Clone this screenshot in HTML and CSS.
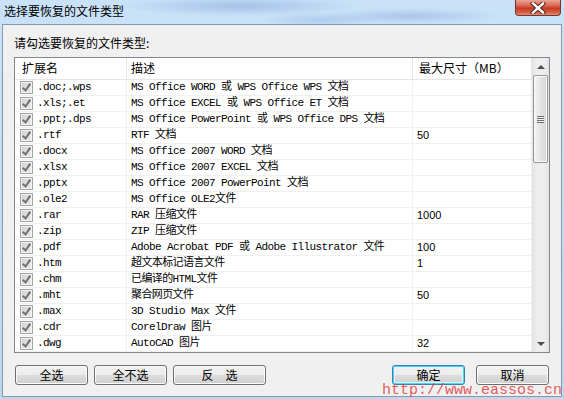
FILE: index.html
```html
<!DOCTYPE html>
<html lang="zh-CN">
<head>
    <meta charset="UTF-8">
    <title>选择要恢复的文件类型</title>
    <link rel="stylesheet" href="styles.css">
</head>
<body>
<div class="window">
    <div class="titlebar">
        <span class="title">选择要恢复的文件类型</span>
        <span class="close-btn">
            <svg width="16" height="12" viewBox="0 0 16 12">
                <path d="M3 1.5 L13 10.5 M13 1.5 L3 10.5" stroke="#4a2a24" stroke-width="4.4" stroke-linecap="square"/>
                <path d="M3 1.5 L13 10.5 M13 1.5 L3 10.5" stroke="#fff" stroke-width="2.4" stroke-linecap="square"/>
            </svg>
        </span>
    </div>
    <div class="client">
        <div class="prompt">请勾选要恢复的文件类型:</div>
        <div class="listview">
            <div class="list-body">
                <div class="list-head">
                    <div class="hcell">扩展名</div>
                    <div class="hcell">描述</div>
                    <div class="hcell">最大尺寸（MB）</div>
                </div>
                <div class="row"><div class="cell ext"><span class="check"></span>.doc;.wps</div><div class="cell desc">MS Office WORD 或 WPS Office WPS 文档</div><div class="cell size"></div></div>
                <div class="row"><div class="cell ext"><span class="check"></span>.xls;.et</div><div class="cell desc">MS Office EXCEL 或 WPS Office ET 文档</div><div class="cell size"></div></div>
                <div class="row"><div class="cell ext"><span class="check"></span>.ppt;.dps</div><div class="cell desc">MS Office PowerPoint 或 WPS Office DPS 文档</div><div class="cell size"></div></div>
                <div class="row"><div class="cell ext"><span class="check"></span>.rtf</div><div class="cell desc">RTF 文档</div><div class="cell size">50</div></div>
                <div class="row"><div class="cell ext"><span class="check"></span>.docx</div><div class="cell desc">MS Office 2007 WORD 文档</div><div class="cell size"></div></div>
                <div class="row"><div class="cell ext"><span class="check"></span>.xlsx</div><div class="cell desc">MS Office 2007 EXCEL 文档</div><div class="cell size"></div></div>
                <div class="row"><div class="cell ext"><span class="check"></span>.pptx</div><div class="cell desc">MS Office 2007 PowerPoint 文档</div><div class="cell size"></div></div>
                <div class="row"><div class="cell ext"><span class="check"></span>.ole2</div><div class="cell desc">MS Office OLE2文件</div><div class="cell size"></div></div>
                <div class="row"><div class="cell ext"><span class="check"></span>.rar</div><div class="cell desc">RAR 压缩文件</div><div class="cell size">1000</div></div>
                <div class="row"><div class="cell ext"><span class="check"></span>.zip</div><div class="cell desc">ZIP 压缩文件</div><div class="cell size"></div></div>
                <div class="row"><div class="cell ext"><span class="check"></span>.pdf</div><div class="cell desc">Adobe Acrobat PDF 或 Adobe Illustrator 文件</div><div class="cell size">100</div></div>
                <div class="row"><div class="cell ext"><span class="check"></span>.htm</div><div class="cell desc">超文本标记语言文件</div><div class="cell size">1</div></div>
                <div class="row"><div class="cell ext"><span class="check"></span>.chm</div><div class="cell desc">已编译的HTML文件</div><div class="cell size"></div></div>
                <div class="row"><div class="cell ext"><span class="check"></span>.mht</div><div class="cell desc">聚合网页文件</div><div class="cell size">50</div></div>
                <div class="row"><div class="cell ext"><span class="check"></span>.max</div><div class="cell desc">3D Studio Max 文件</div><div class="cell size"></div></div>
                <div class="row"><div class="cell ext"><span class="check"></span>.cdr</div><div class="cell desc">CorelDraw 图片</div><div class="cell size"></div></div>
                <div class="row"><div class="cell ext"><span class="check"></span>.dwg</div><div class="cell desc">AutoCAD 图片</div><div class="cell size">32</div></div>
            </div>
            <div class="scrollbar">
                <div class="sb-btn"><span class="arrow-up"></span></div>
                <div class="sb-track">
                    <div class="sb-thumb"><span class="grip"></span></div>
                </div>
                <div class="sb-btn"><span class="arrow-down"></span></div>
            </div>
        </div>
        <div class="buttons">
            <div class="btn-group">
                <button class="btn">全选</button>
                <button class="btn">全不选</button>
                <button class="btn wide">反　选</button>
            </div>
            <div class="btn-group">
                <button class="btn default">确定</button>
                <button class="btn">取消</button>
            </div>
        </div>
    </div>
    <div class="watermark">http://www.eassos.cn</div>
</div>
</body>
</html>
```

FILE: styles.css
```css
body {
    margin: 0;
    font-family: "Noto Sans CJK SC", "Liberation Sans", sans-serif;
    font-size: 12px;
    color: #000;
}
.window {
    position: relative;
    width: 564px;
    height: 399px;
    box-sizing: border-box;
    padding: 0 2px 2px 2px;
    overflow: hidden;
    background:
        radial-gradient(ellipse 120px 10px at 240px 6px, rgba(150, 180, 225, 0.7), transparent),
        radial-gradient(ellipse 90px 8px at 410px 16px, rgba(150, 180, 225, 0.6), transparent),
        radial-gradient(ellipse 60px 8px at 320px 20px, rgba(160, 190, 230, 0.6), transparent),
        linear-gradient(#c9e2f8, #bcd7f2);
}
.titlebar {
    height: 24px;
    display: flex;
    justify-content: space-between;
    align-items: flex-start;
}
.title {
    padding: 3px 0 0 2px;
    line-height: 16px;
}
.close-btn {
    width: 46px;
    height: 16px;
    margin-right: 1px;
    box-sizing: border-box;
    border: 1px solid #6b3a34;
    border-top: none;
    border-radius: 0 0 4px 4px;
    background: linear-gradient(#e9a597 0%, #dd6a55 35%, #c43b22 55%, #d55a40 80%, #e98a70 100%);
    display: flex;
    align-items: center;
    justify-content: center;
}
.client {
    height: 373px;
    box-sizing: border-box;
    border: 1px solid #8796ab;
    background: #f0f0f0;
    padding: 10px 11px 0 11px;
}
.prompt {
    line-height: 16px;
    margin-bottom: 6px;
}
.listview {
    display: flex;
    width: 536px;
    height: 296px;
    box-sizing: border-box;
    border: 1px solid #828790;
    background: #fff;
}
.list-body {
    flex: 1;
    overflow: hidden;
}
.list-head, .row {
    display: grid;
    grid-template-columns: 112px 286px 1fr;
}
.list-head {
    height: 22px;
    box-sizing: border-box;
    border-bottom: 1px solid #e5e5e5;
}
.hcell {
    border-right: 1px solid #e5e5e5;
    padding-left: 6px;
    line-height: 20px;
}
.hcell:first-child {
    padding-left: 7px;
}
.hcell:nth-child(2) {
    padding-left: 4px;
}
.row {
    height: 16px;
    box-sizing: border-box;
    border-bottom: 1px solid #f0f0f0;
}
.cell {
    border-right: 1px solid #f0f0f0;
    line-height: 15px;
    white-space: nowrap;
    overflow: hidden;
}
.ext, .desc {
    font-family: "Liberation Mono", "Noto Sans CJK SC", monospace;
    font-size: 11px;
    letter-spacing: -0.6px;
}
.ext {
    display: flex;
    align-items: center;
    padding-left: 5px;
}
.desc {
    padding-left: 4px;
}
.size {
    padding-left: 4px;
    font-family: "Liberation Sans", sans-serif;
    font-size: 11px;
}
.check {
    position: relative;
    flex: none;
    width: 13px;
    height: 13px;
    box-sizing: border-box;
    margin-right: 4px;
    border: 1px solid #a3a3a3;
    background: linear-gradient(135deg, #d2d2d2, #ececec);
    box-shadow: inset 0 0 0 1px #f4f4f4;
}
.check::after {
    content: "";
    position: absolute;
    left: 3px;
    top: 0;
    width: 3px;
    height: 7px;
    border-right: 2px solid #6f6f6f;
    border-bottom: 2px solid #6f6f6f;
    transform: rotate(35deg);
}
.scrollbar {
    width: 17px;
    display: flex;
    flex-direction: column;
    background: linear-gradient(90deg, #e3e3e3, #eeeeee 30%, #eeeeee 70%, #e3e3e3);
}
.sb-btn {
    height: 17px;
    display: flex;
    align-items: center;
    justify-content: center;
}
.arrow-up {
    border-left: 4px solid transparent;
    border-right: 4px solid transparent;
    border-bottom: 4px solid #4d4d4d;
}
.arrow-down {
    border-left: 4px solid transparent;
    border-right: 4px solid transparent;
    border-top: 4px solid #4d4d4d;
}
.sb-track {
    flex: 1;
    padding: 0 1px;
}
.sb-thumb {
    height: 88px;
    box-sizing: border-box;
    border: 1px solid #979797;
    border-radius: 2px;
    background: linear-gradient(90deg, #f4f4f4, #e4e4e4 50%, #d3d3d3);
    box-shadow: inset 0 0 0 1px #fafafa;
    display: flex;
    align-items: center;
    justify-content: center;
}
.grip {
    width: 7px;
    height: 7px;
    background: repeating-linear-gradient(#6d6d6d 0 1px, #f2f2f2 1px 2px);
}
.buttons {
    display: flex;
    justify-content: space-between;
    margin-top: 12px;
    padding-left: 1px;
}
.btn-group {
    display: flex;
    gap: 6px;
}
.btn-group + .btn-group {
    gap: 11px;
    margin-right: 1px;
}
.btn {
    width: 73px;
    height: 20px;
    padding: 0;
    border: 1px solid #707070;
    border-radius: 3px;
    background: linear-gradient(#f2f2f2 0%, #ebebeb 50%, #dddddd 50%, #cfcfcf 100%);
    box-shadow: inset 0 0 0 1px #fbfbfb;
    font-family: "Noto Sans CJK SC", sans-serif;
    font-size: 12px;
    line-height: 16px;
    color: #000;
}
.btn.wide {
    width: 93px;
}
.btn.default {
    border-color: #3c7fb1;
    box-shadow: inset 0 0 0 1px #48d5fd, inset 0 0 0 2px #e4f4fc;
}
.watermark {
    position: absolute;
    left: 382px;
    top: 383px;
    font-family: "Liberation Mono", monospace;
    font-size: 15px;
    line-height: 16px;
    color: rgba(225, 50, 50, 0.8);
    white-space: nowrap;
}
```
